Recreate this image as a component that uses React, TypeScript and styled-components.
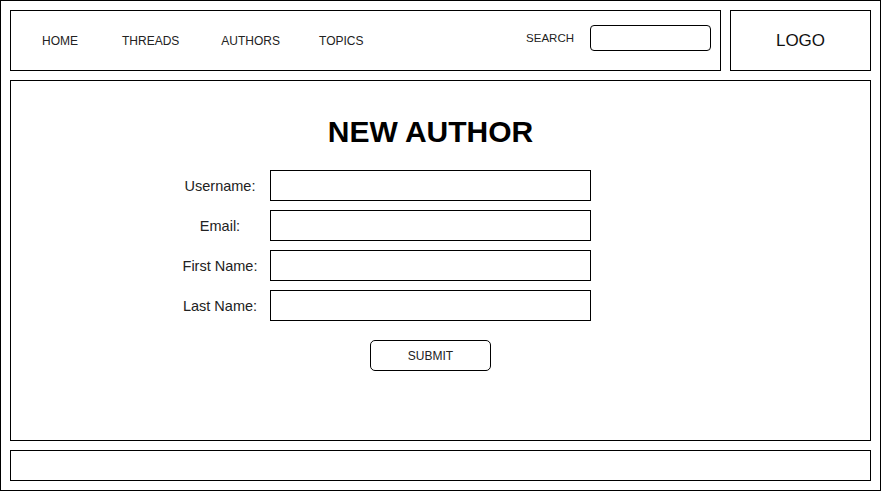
import React from "react";
import styled, { createGlobalStyle } from "styled-components";

const GlobalStyle = createGlobalStyle`
  html, body { margin: 0; padding: 0; background: #fff; }
  body { font-family: "Liberation Sans", Arial, sans-serif; color: #000; }
  * { box-sizing: border-box; }
`;

const Frame = styled.div`
  width: 881px;
  height: 491px;
  border: 1px solid #000;
  padding: 9px;
  display: flex;
  flex-direction: column;
  gap: 9px;
  background: #fff;
`;

const TopRow = styled.div`
  display: flex;
  gap: 9px;
  height: 61px;
  flex: none;
`;

const Header = styled.header`
  width: 711px;
  border: 1px solid #000;
  display: flex;
  align-items: center;
  padding: 0 9px 0 31px;
`;

const Nav = styled.nav`
  display: flex;
  align-items: center;
  flex: 1;
`;

const NavLink = styled.a<{ $ml: number }>`
  font-size: 12px;
  color: #222;
  text-decoration: none;
  margin-left: ${(p) => p.$ml}px;
  line-height: 14px;
`;

const SearchGroup = styled.div`
  display: flex;
  align-items: center;
  gap: 16px;
  margin-bottom: 5px;
`;

const SearchLabel = styled.span`
  font-size: 11.5px;
  color: #222;
`;

const SearchInput = styled.input`
  width: 121px;
  height: 26px;
  border: 1px solid #000;
  border-radius: 4px;
  padding: 0 6px;
  outline: none;
  background: #fff;
`;

const LogoBox = styled.div`
  width: 141px;
  border: 1px solid #000;
  display: flex;
  align-items: center;
  justify-content: center;
  font-size: 17px;
  color: #111;
`;

const Main = styled.main`
  height: 361px;
  flex: none;
  border: 1px solid #000;
  padding: 36px 20px 0 0;
  display: flex;
  flex-direction: column;
`;

const Title = styled.h1`
  margin: 0;
  font-size: 30px;
  line-height: 30px;
  font-weight: bold;
  text-align: center;
`;

const Form = styled.form`
  margin-top: 23px;
  display: grid;
  grid-template-columns: 1fr 321px 1fr;
  grid-auto-rows: 31px;
  row-gap: 9px;
`;

const Label = styled.label`
  grid-column: 1;
  justify-self: end;
  width: 96px;
  margin-right: 2px;
  text-align: center;
  align-self: center;
  font-size: 14.5px;
  color: #222;
`;

const Field = styled.input`
  grid-column: 2;
  height: 31px;
  border: 1px solid #000;
  padding: 0 6px;
  outline: none;
  background: #fff;
`;

const ButtonRow = styled.div`
  grid-column: 2;
  display: flex;
  justify-content: center;
  margin-top: 10px;
`;

const SubmitButton = styled.button`
  width: 121px;
  height: 31px;
  border: 1px solid #000;
  border-radius: 5px;
  background: #fff;
  font-family: "Liberation Sans", Arial, sans-serif;
  font-size: 12px;
  color: #222;
  padding: 0;
`;

const Footer = styled.footer`
  height: 31px;
  flex: none;
  border: 1px solid #000;
`;

const fields = ["Username:", "Email:", "First Name:", "Last Name:"];

export default function App() {
  return (
    <>
      <GlobalStyle />
      <Frame>
        <TopRow>
          <Header>
            <Nav>
              <NavLink $ml={0}>HOME</NavLink>
              <NavLink $ml={44}>THREADS</NavLink>
              <NavLink $ml={42}>AUTHORS</NavLink>
              <NavLink $ml={39}>TOPICS</NavLink>
            </Nav>
            <SearchGroup>
              <SearchLabel>SEARCH</SearchLabel>
              <SearchInput />
            </SearchGroup>
          </Header>
          <LogoBox>LOGO</LogoBox>
        </TopRow>
        <Main>
          <Title>NEW AUTHOR</Title>
          <Form onSubmit={(e) => e.preventDefault()}>
            {fields.map((f) => (
              <React.Fragment key={f}>
                <Label>{f}</Label>
                <Field />
              </React.Fragment>
            ))}
            <ButtonRow>
              <SubmitButton type="submit">SUBMIT</SubmitButton>
            </ButtonRow>
          </Form>
        </Main>
        <Footer />
      </Frame>
    </>
  );
}
